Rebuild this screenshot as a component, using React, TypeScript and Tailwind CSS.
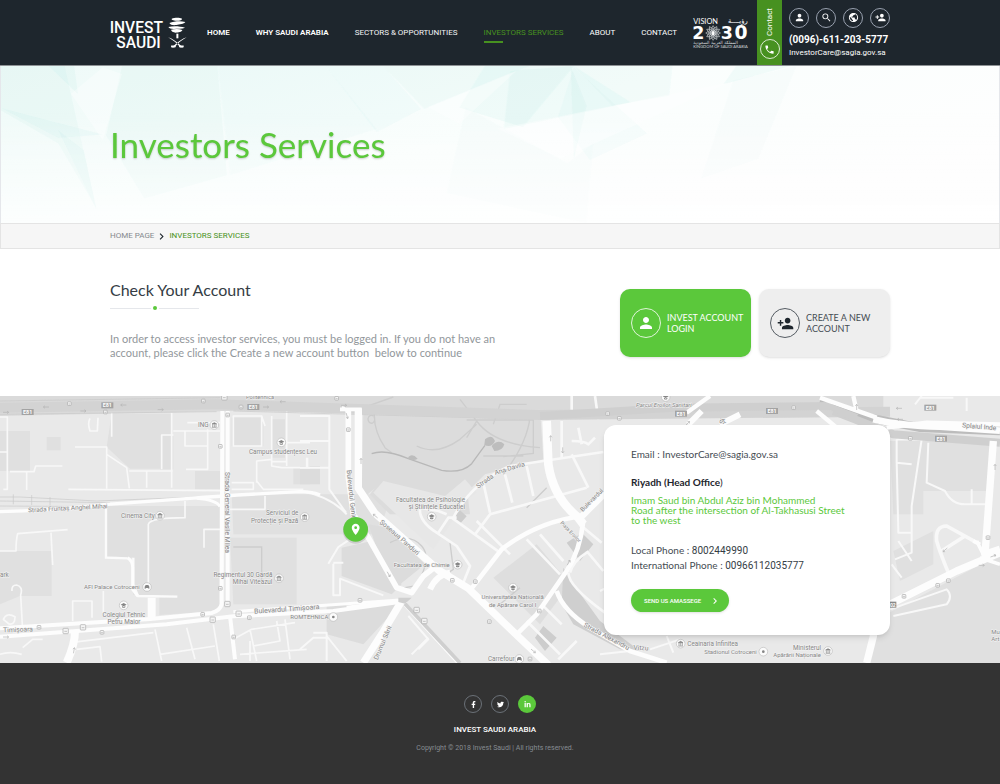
import React from "react";
import { MdPerson, MdSearch, MdPublic, MdPersonAdd, MdPhone, MdLocationOn, MdChevronRight } from "react-icons/md";
import { FaFacebookF, FaTwitter, FaLinkedinIn } from "react-icons/fa";

const roboto = "font-[Roboto,'Liberation_Sans',sans-serif]";
const lato = "font-[Lato,'Open_Sans',sans-serif]";

function InvestLogo() {
  return (
    <svg viewBox="28 39 232 114" className="h-[38px] w-[77px] shrink-0" fill="#fff" role="img" aria-label="Invest Saudi">
      <text x="27" y="95" fontFamily="Roboto" fontWeight="500" fontSize="47">INVEST</text>
      <text x="47" y="140" fontFamily="Roboto" fontWeight="500" fontSize="47">SAUDI</text>
      <path d="M214 53c8-4 24-4 30-1 3 3-2 6-12 7-10 0-20-1-18-6z" />
      <path d="M207 66c14-5 32-7 48-3-4 6-18 7-27 9-10 1-18 0-21-6z" />
      <path d="M204 78c14-4 34-3 50 2-8 4-22 2-34 4-8 0-15-2-16-6z" />
      <path d="M212 86c10-2 24-3 34 1-2 6-12 8-20 8-8-1-14-4-14-9z" />
      <path d="M228 98h6v14h-6z" />
      <path d="M203 109c13 4 26 13 38 25l8 6h-9c-10-14-22-22-37-31zM259 109c-13 4-26 13-38 25l-8 6h9c10-14 22-22 37-31z" />
      <path d="M212 134h14v5h-14zM236 134h14v5h-14z" />
    </svg>
  );
}

function VisionLogo() {
  const petals = Array.from({ length: 12 }, (_, i) => i * 30);
  return (
    <svg viewBox="38 46 170 100" className="h-[34px] w-[57px] shrink-0" fill="#fff" role="img" aria-label="Vision 2030">
      <text x="42" y="69" fontFamily="Lato" fontSize="22">VISION</text>
      <text x="204" y="67" textAnchor="end" fontFamily="DejaVu Sans" fontSize="20">رؤيــــة</text>
      <text x="39" y="113" fontFamily="DejaVu Sans" fontWeight="700" fontSize="52">2</text>
      <text x="124" y="113" fontFamily="DejaVu Sans" fontWeight="700" fontSize="52">3</text>
      <text x="165" y="113" fontFamily="DejaVu Sans" fontWeight="700" fontSize="56">0</text>
      <g fill="none" stroke="#c6cacd" strokeWidth="2">
        {petals.map((a) => (
          <path key={a} d="M101 96l-6-12 6-10 6 10z" transform={`rotate(${a} 101 96)`} />
        ))}
        <circle cx="101" cy="96" r="9" />
      </g>
      <path d="M98 91h6v11h-6z" />
      <text x="42" y="129" fontFamily="DejaVu Sans" fontSize="13" fill="#d5d8da">المملكة العربية السعودية</text>
      <text x="42" y="141" fontFamily="Lato" fontSize="12" fill="#d5d8da">KINGDOM OF SAUDI ARABIA</text>
    </svg>
  );
}

const navItems = [
  { label: "HOME", cls: "font-semibold text-white" },
  { label: "WHY SAUDI ARABIA", cls: "font-semibold text-white" },
  { label: "SECTORS & OPPORTUNITIES", cls: "text-gray-100" },
  { label: "INVESTORS SERVICES", cls: "text-[#479120]", active: true },
  { label: "ABOUT", cls: "text-white" },
  { label: "CONTACT", cls: "text-white" },
];

const tools = [
  { label: "Account", Icon: MdPerson },
  { label: "Search", Icon: MdSearch },
  { label: "Language", Icon: MdPublic },
  { label: "Register", Icon: MdPersonAdd },
];

function Header() {
  return (
    <header className={`border-b border-[#8e9295] bg-[#1e262d] ${roboto}`}>
      <div className="mx-auto flex h-[65px] max-w-[780px] items-center">
        <a href="#home" className="shrink-0"><InvestLogo /></a>
        <nav className="ml-5 flex gap-[26px] text-[8px] leading-3 whitespace-nowrap">
          {navItems.map((n) => (
            <a key={n.label} href="#nav" className={`relative ${n.cls}`}>
              {n.label}
              {n.active && <span className="absolute -bottom-[4px] left-0 h-[2px] w-[19px] bg-[#479120]" />}
            </a>
          ))}
        </nav>
        <div className="ml-auto flex h-full shrink-0 items-center">
          <VisionLogo />
          <a href="#contact" className="ml-2 flex h-full w-[25px] flex-col items-center justify-between bg-[#479120] pt-2 pb-1.5 text-white">
            <span className="rotate-180 text-[8px] leading-3 [writing-mode:vertical-rl]">Contact</span>
            <span className="flex size-5 items-center justify-center rounded-full border border-white/80"><MdPhone size={11} /></span>
          </a>
          <div className="ml-[7px] flex w-[101px] flex-col text-white">
            <div className="flex justify-between">
              {tools.map(({ label, Icon }) => (
                <button key={label} aria-label={label} className="flex size-5 items-center justify-center rounded-full border border-gray-400">
                  <Icon size={11} />
                </button>
              ))}
            </div>
            <a href="tel:00966112035777" className="mt-1 text-[10px] leading-4 font-bold whitespace-nowrap">(0096)-611-203-5777</a>
            <a href="mailto:InvestorCare@sagia.gov.sa" className="text-[8px] leading-[10px]">InvestorCare@sagia.gov.sa</a>
          </div>
        </div>
      </div>
    </header>
  );
}

function Hero() {
  return (
    <section className="relative border-x border-gray-200 bg-[#fbfefe]">
      <svg viewBox="0 16 1568 474" preserveAspectRatio="none" className="absolute inset-0 size-full" aria-hidden="true">
        <defs>
          <linearGradient id="wash" x1="0" y1="0" x2="1" y2="0.5">
            <stop offset="0" stopColor="#eefaf8" />
            <stop offset="0.55" stopColor="#fafefd" />
            <stop offset="1" stopColor="#fefefe" />
          </linearGradient>
          <linearGradient id="fade" x1="0" y1="0" x2="0" y2="1">
            <stop offset="0.3" stopColor="#fff" stopOpacity="0" />
            <stop offset="1" stopColor="#fff" stopOpacity="0.6" />
          </linearGradient>
        </defs>
        <rect y="16" width="1568" height="474" fill="url(#wash)" />
        <g fill="#7ed8ce" opacity=".8">
          <path opacity=".08" d="M0 16h100l50 430L90 250 0 150z" />
          <path opacity=".1" d="M75 16h40l6 85z" />
          <path opacity=".09" d="M0 143l160 80-70 10z" />
          <path opacity=".09" d="M90 210l40 60 20 180z" />
          <path opacity=".08" d="M190 16h150l15 330-130 70-60-190z" />
          <path opacity=".05" d="M340 16h170l80 190-230 140z" />
          <path opacity=".08" d="M600 16h230l-165 130z" />
          <path opacity=".07" d="M510 16h90l60 130-70 70z" />
          <path opacity=".1" d="M760 16h140l-80 185-100-60z" />
          <path opacity=".1" d="M800 30l100-14 90 110-200 80z" />
          <path opacity=".1" d="M895 16l5 280 20-160z" />
          <path opacity=".07" d="M900 20l115 200-90 80-50-130z" />
          <path opacity=".08" d="M900 16h155l-5 90-90 30z" />
          <path opacity=".1" d="M1155 16h85l-105 55z" />
          <path opacity=".04" d="M1150 60l100-44-60 280-90 60z" />
          <path opacity=".04" d="M700 400l30-260 160 170 40-60-10 240z" />
        </g>
        <path fill="#fff" opacity=".35" d="M670 140L810 30l-90 160zM1145 65L780 205l100 90zM110 100l50-80 30 20-30 200z" />
        <rect y="16" width="1568" height="474" fill="url(#fade)" />
      </svg>
      <div className="relative mx-auto max-w-[780px] pt-[58px] pb-[59px]">
        <h1 className={`text-[35px] leading-10 text-[#5bc83b] [text-shadow:0_1px_2px_rgba(0,0,0,0.2)] ${lato}`}>Investors Services</h1>
      </div>
    </section>
  );
}

function Breadcrumb() {
  return (
    <nav aria-label="Breadcrumb" className={`border border-[#e4e4e4] bg-[#f6f6f6] ${roboto}`}>
      <div className="mx-auto flex h-6 max-w-[780px] items-center gap-px text-[8px] leading-3">
        <a href="#home" className="text-[#85898d]">HOME PAGE</a>
        <MdChevronRight size={13} className="text-[#1e262d]" />
        <span className="text-[#479120]">INVESTORS SERVICES</span>
      </div>
    </nav>
  );
}

function Account() {
  return (
    <section className={`bg-white ${lato}`}>
      <div className="mx-auto flex max-w-[780px] items-start justify-between pt-[31px] pb-9">
        <div>
          <h2 className="text-[16px] leading-5 text-[#353d45]">Check Your Account</h2>
          <div className="mt-[6px] flex w-[89px] items-center gap-[2px]">
            <span className="h-px flex-1 bg-gray-200" />
            <span className="size-1 rounded-full bg-[#5bc83b]" />
            <span className="h-px flex-1 bg-gray-200" />
          </div>
          <p className="mt-[22px] w-[400px] text-[11px] leading-[14px] whitespace-pre-line text-[#92979b]">
            {"In order to access investor services, you must be logged in. If you do not have an\naccount, please click the Create a new account button \u00a0below to continue"}
          </p>
        </div>
        <div className="mt-[9px] flex gap-2 text-[9px] leading-[11px]">
          <button className="flex h-[68px] w-[131px] items-center gap-1.5 rounded-[10px] bg-[#5bc83b] pl-[11px] text-left text-white shadow-sm">
            <span className="flex size-[30px] shrink-0 items-center justify-center rounded-full border border-white/80"><MdPerson size={18} /></span>
            <span>INVEST ACCOUNT<br />LOGIN</span>
          </button>
          <button className="flex h-[68px] w-[131px] items-center gap-1.5 rounded-[10px] bg-[#eee] pl-[11px] text-left text-[#454c53] shadow">
            <span className="flex size-[30px] shrink-0 items-center justify-center rounded-full border border-[#555c63] text-[#1e262d]"><MdPersonAdd size={17} /></span>
            <span>CREATE A NEW<br />ACCOUNT</span>
          </button>
        </div>
      </div>
    </section>
  );
}

type LabelProps = { x: number; y: number; s?: number; r?: number; anchor?: "start" | "middle" | "end"; italic?: boolean; children: React.ReactNode };
function Label({ x, y, s = 19, r = 0, anchor = "start", italic, children }: LabelProps) {
  return (
    <text x={x} y={y} fontSize={s} textAnchor={anchor} fontStyle={italic ? "italic" : "normal"} transform={`rotate(${r} ${x} ${y})`}
      fill="#858585" stroke="#f4f4f4" strokeWidth="3" paintOrder="stroke" fontFamily="Roboto">
      {children}
    </text>
  );
}

function Shield({ x, y }: { x: number; y: number }) {
  return (
    <g transform={`translate(${x} ${y})`}>
      <rect x="-18" y="-9" width="36" height="18" fill="#a3a3a3" />
      <text textAnchor="middle" y="6" fontSize="16" fontWeight="700" fontFamily="Roboto" fill="#fff">E81</text>
    </g>
  );
}

function Poi({ x, y, kind = "cap" }: { x: number; y: number; kind?: "cap" | "bank" | "dot" | "car" }) {
  return (
    <g transform={`translate(${x} ${y})`}>
      <circle r="13" fill="#fbfbfb" stroke="#bdbdbd" strokeWidth="2" />
      {kind === "cap" && <path d="M-9-2L0-7 9-2 0 3zM-5 2v4q5 3 10 0V2L0 5z" fill="#858585" />}
      {kind === "bank" && <path d="M-7-3L0-7l7 4zM-5-2v8M0-2v8M5-2v8M-7 7h14" fill="#858585" stroke="#858585" strokeWidth="2" />}
      {kind === "dot" && <circle r="4" fill="#858585" />}
      {kind === "car" && <path d="M-7 5v-6l3-5h8l3 5v6H4V3h-8v2z" fill="#858585" />}
    </g>
  );
}

function Stop({ x, y, big }: { x: number; y: number; big?: boolean }) {
  const w = big ? 16 : 11;
  return (
    <g transform={`translate(${x} ${y})`}>
      <rect x={-w / 2} y={-w / 2} width={w} height={w} rx="2" fill="#f5f5f5" stroke="#a9a9a9" strokeWidth="2" />
      <path d={`M${-w / 4} 1h${w / 2}`} stroke="#a9a9a9" strokeWidth="2" />
    </g>
  );
}

function Arrow({ x, y, r = 0 }: { x: number; y: number; r?: number }) {
  return <path transform={`translate(${x} ${y}) rotate(${r})`} d="M-9 0H8M3-4l5 4-5 4" fill="none" stroke="#b4b4b4" strokeWidth="2" />;
}

function CityMap() {
  return (
    <svg viewBox="0 15 3000 801" preserveAspectRatio="xMidYMid slice" className="absolute inset-0 size-full" role="img" aria-label="Map">
      <rect y="15" width="3000" height="801" fill="#e9e9e9" />

      {/* blocks */}
      <g fill="#e0e0e0">
        <path d="M0 15h2650v50L1620 75 700 60 0 75z" fill="#dadada" />
        <path d="M0 120h90v120H0zM140 138h42v40h-42zM335 68h180v165H390L320 168zM0 480h155v135H60L0 640z" />
        <path d="M318 345h340v315l-180 12V612H400V500l-82-5zM485 135h35v100h-40zM585 240h75v55h-75z" />
        <path d="M695 80h95v85h-95zM815 85h40v115h-40zM880 230h50v50h-50zM695 310h480l-40 120H700zM690 440h200v200H700z" />
        <path d="M900 225h60v55h-60zM1025 470l90-20 90 130-30 30-150-55zM980 640l230-10-120 130-110-30z" fill="#dcdcdc" />
      </g>
      <path d="M1090 55h530l10 150-175 45-75 75-65 55-170-105-60 50z" fill="#dcdcdc" />
      <path d="M1140 270l-30 40 60 60h240l-10-85-60 60z" fill="#dcdcdc" />
      <path d="M1150 270l-30 35 180 170 100-150 30-20-35-40-60 50z" fill="#e7e7e7" />
      <path d="M1105 400l60 10 110 110-100 80z" fill="#dcdcdc" />
      <path d="M1480 560l130-100 100 120-90 120z" fill="#dedede" />
      <path d="M1690 530l30 50 80 110 120 90-60-5-140-75-35-60z" fill="#cfcfcf" />
      <path d="M1360 380l20-22 20 18-20 22zM1630 705l40 35-35 40-30-40zM1700 455l45-30 35 35-40 50z" fill="#cdcdcd" />
      <path d="M2670 150h300v150h-200v70h-90zM2680 480l120-60v100l-100 50zM2620 690l380-200v326H2600z" fill="#e0e0e0" />

      {/* park paths and lake */}
      <g fill="none" stroke="#cdcdcd" strokeWidth="4">
        <path d="M1090 50l90-32M1125 50q-10 60 30 120l20 15M1120 75a10 12 0 1 0 1 1M1250 165q60 30 130-20l50-45M1380 25l50 65-30 50M1400 87h200v100l-90 10M1430 90q50 70 190 80M1590 80q-10 80-80 170M1450 195l120 0M1480 100l20-60h80" />
        <path d="M1170 455q60-30 95 10t-20 120l-60 10M1350 455l10 80-30 20M1640 290l-60 60M1500 640l60-50M700 468h85v110" />
      </g>
      <path d="M1115 188q40-15 110 15l100 35q60 10 90-20 25-35 40-55" fill="none" stroke="#b8b8b8" strokeWidth="4" />
      <path d="M1455 145q20-18 30 5-10 22-32 12zM1475 165q20-22 38-5-5 20-30 20zM1225 198q12-12 28 5-12 8-28 0z" fill="#bdbdbd" />

      {/* minor roads */}
      <g fill="none" stroke="#f8f8f8" strokeWidth="5" strokeLinejoin="round">
        <path d="M0 78h22v217H10M0 183h22M30 242h72l5-17h80M80 242v55M335 65v72M225 168h95v125M320 190l60 40 8 62M320 168v20M388 240h130M440 240v50M485 235V132h35M515 65v225M520 120h140M555 120v45h68v-50M623 120v115h-65M562 95h98" />
        <path d="M270 82q-8 15 0 38h22l2-40M205 295l355 3 120 1M0 480h48q0-35 5-52l150-12M153 425l5 97M445 600V400q5-20 110-20v-50M310 600v65M218 690v-60h58v50M612 470v-55h50M695 275h65v20h-65M690 355h105v-40" />
        <path d="M36 600q-2-18 14-18 20 5 12 30l5 90M10 685q10-22 35-8 0 25-18 22zM0 790q30-10 65 0M68 770l30-25h30M230 775l70-8 5 45M210 755l250-30M465 715l20 95M480 790l165-25M560 710l25 95M640 700l18 110M700 745l55-30 130-20M750 750v60M750 715l20 95M830 690l10 60-80 15M855 685l15 120M720 790l200-15" />
        <path d="M700 75v90h85v-90zM785 75l10 30M860 60v165M815 75v150l30 5h85M860 155h70M815 212h45M770 275v-65l45-5M770 270l20 25h120M920 200v30" />
      </g>
      <path d="M318 345v155l65 2M400 500v80l14 35 118 2" fill="none" stroke="#fbfbfb" strokeWidth="7" />
      <g transform="translate(900 0)" fill="none" stroke="#f8f8f8" strokeLinejoin="round">
        <path strokeWidth="6" d="M0 75h88v220l50 70M0 150h88M0 230h88M22 200v28M0 300q90 15 140 70M85 518l30-50 30-20M100 518v95h20v-50l130 50M100 515l30 0M0 775l40-35h45M40 725h40v85M80 735l60 75M325 675l60 70-30 30M385 740l-50 50" />
        <path strokeWidth="8" d="M460 380q55-105 170-155l280-42M455 380l145 105M550 275l20 90M615 250l22 85M680 225l20 90M740 215l20 80M525 430l45-60 290-80M415 425l30-45h25M440 370l-25-10-55-10q-5 40 50 75l60 40 40 60-20 50M680 445l100 105M720 430l70 80M630 490l-100-100M785 90v110M815 15v50M885 15l10 70M865 290l-50-100M815 150q40 0 50 10l20-20M835 110l10 50M725 640l60 60M680 690l100 100M830 750l-55 55M905 455l-60-50M860 480l50 60M810 545q10-35 50-60M805 545q0 40 110 120" />
      </g>
      <g transform="translate(1800 0)" fill="none" stroke="#f8f8f8" strokeLinejoin="round">
        <path strokeWidth="6" d="M890 145h75l-30 200v140l-50 20M890 145v70l45 5M890 210l5 215h40M985 155l-5 120 55 25q20 40 60 40h60M1115 295v45M875 520l30 40M895 450l40 60M870 655l170-60q20 20 0 45l-160 35M0 80l40-25M0 600l40-20M945 40l20-25M960 20h100M1100 20v40M200 735l20 50M150 775l90-30M0 790l90-10" />
        <path strokeWidth="11" d="M1045 545q-25-60-35-95-5-45 30-45l100 55M1025 480l70-45" />
      </g>

      {/* rail corridor */}
      <g fill="none" stroke="#c9c9c9" strokeWidth="2">
        <path d="M0 318h60l230 12 380-15M0 330l330 5M0 345l300 2M40 310v30M95 312v30M150 318v25M0 30l660-10M0 70l650-8M700 60l900 25M1640 85l700-40" />
      </g>
      <path d="M0 50L650 40l970 32 1050-10" fill="none" stroke="#d3d3d3" strokeWidth="30" />
      <path d="M2460 30l120 45 180 35 240 10" fill="none" stroke="#bcbcbc" strokeWidth="26" />
      <path d="M1620 75l400-25 480-5M2500 60l180 70 320 25" fill="none" stroke="#cfcfcf" strokeWidth="24" />

      {/* main roads */}
      <g fill="none" stroke="#fdfdfd" strokeLinejoin="round">
        <path strokeWidth="10" d="M0 362q180-5 320-22l250-18q130-10 330-20 40 0 60 10" />
        <path strokeWidth="9" d="M590 322q60 5 70 25M383 500q15 10 15 30v65l15 20" />
        <path strokeWidth="12" d="M667 60l-2 580q-5 20-30 26L450 684 0 712M683 60v570M690 675l15 130" />
        <path strokeWidth="12" d="M0 737l500-37 200-24 300-16 220-30" />
        <path strokeWidth="9" d="M700 662l500-35" />
        <path strokeWidth="24" d="M455 620v60M225 720q0 40-25 95" />
        <path strokeWidth="17" d="M1045 60v200l15 110 45 70 85 150 45 15 35-50 45-35" />
        <path strokeWidth="22" d="M1075 52v240l50 75 190 170 90 55 150 145 90 85" />
        <path strokeWidth="11" d="M1020 55h65M1045 60l-20-10" />
        <path strokeWidth="22" d="M1205 630l-60 100-55 85" />
        <path strokeWidth="12" d="M1215 640l160 175M1040 650l180-22" />
        <path strokeWidth="18" d="M1290 595q20-45 60-50" />
        <path strokeWidth="26" d="M1640 90l5 130q15 100 90 160l15 20" />
        <path strokeWidth="14" d="M1405 605l100-130q110-85 245-100l70-70M1750 390q-10 90-50 150l-90 130-60 60M1670 600q20 60 100 110l120 70 110 35" />
        <path strokeWidth="18" d="M1740 380l150-145M2220 70l-60 30M2105 60l-40 40" />
        <path strokeWidth="13" d="M2060 65l70-50M2570 60l-10-45M2460 20l170 60M2660 110l120-15 220 5M2450 60l60 50" />
        <path strokeWidth="20" d="M2620 85q80 20 200 22l180 12" />
        <path strokeWidth="22" d="M2980 150l-25 340 45-15M2670 640l200-100 130-55M2600 816l20-80V680" />
        <path strokeWidth="11" d="M2930 450l30 60M2940 460l-20-10M2940 500l60 20" />
      </g>
      <path d="M1195 620h40l-20 18-20-5zM2495 40l80 30-15 20-65-30z" fill="#cfcfcf" />
      <path d="M1215 638l165 178" stroke="#cfcfcf" strokeWidth="11" />

      {/* transit stops and direction arrows */}
      {[[208, 38], [316, 63], [661, 166], [610, 30], [723, 48], [683, 72], [661, 592], [608, 670], [117, 709], [306, 724], [748, 680], [701, 738], [1010, 22], [1045, 116], [1080, 628], [1357, 568], [1426, 572], [1468, 692], [1618, 660], [1590, 804], [1823, 68], [1858, 82], [2381, 50], [2731, 142], [2712, 616], [2813, 583], [2845, 569], [2964, 440]].map(([x, y]) => (
        <Stop key={`${x}-${y}`} x={x} y={y} />
      ))}
      {[[197, 720], [249, 709], [682, 639], [638, 686], [716, 668], [673, 19], [1250, 657], [1273, 690]].map(([x, y]) => (
        <Stop key={`${x}-${y}`} x={x} y={y} big />
      ))}
      {[[18, 64, 0], [138, 48, 180], [250, 60, 0], [370, 42, 180], [482, 56, 0], [798, 48, 0], [848, 32, 180], [18, 738, 0], [222, 778, -80], [1032, 43, 0], [1083, 210, -90], [1041, 75, 75], [1126, 375, -140], [1166, 550, 60], [1652, 142, -90], [1688, 178, 90], [1706, 515, -60], [1600, 780, 40], [2063, 97, -45], [2570, 48, -90], [2697, 52, 180], [2700, 85, 180], [2985, 228, -90], [2980, 495, -20], [2945, 523, 0], [2835, 477, 140]].map(([x, y, r]) => (
        <Arrow key={`${x}-${y}`} x={x} y={y} r={r} />
      ))}
      {[[83, 63], [322, 43], [760, 48], [2043, 68], [2316, 60], [2791, 50], [2823, 143]].map(([x, y]) => (
        <Shield key={`${x}-${y}`} x={x} y={y} />
      ))}
      <g>
        <rect x="2665" y="632" width="24" height="18" fill="#8b8b8b" />
        <text x="2670" y="647" fontSize="15" fontWeight="700" fontFamily="Roboto" fill="#fff">02</text>
      </g>

      {/* labels */}
      <Label x={738} y={24} s={17}>Politehnica</Label>
      <Label x={594} y={108}>ING</Label><Poi x={643} y={102} kind="bank" />
      <Poi x={844} y={154} /><Label x={747} y={189}>Campus studențesc Leu</Label>
      <Label x={85} y={364} s={19} r={-3}>Strada Fruntaș Anghel Mihai</Label>
      <Label x={363} y={380}>Cinema City</Label><Poi x={480} y={374} kind="bank" />
      <Label x={675} y={243} s={20} r={90}>Strada General Vasile Milea</Label>
      <Label x={895} y={373} anchor="end">Serviciul de</Label>
      <Label x={895} y={395} anchor="end">Protecție și Pază</Label><Poi x={914} y={378} kind="bank" />
      <Label x={817} y={557} anchor="end">Regimentul 30 Gardă</Label>
      <Label x={817} y={579} anchor="end">Mihai Viteazul</Label><Poi x={837} y={562} kind="bank" />
      <Label x={0} y={557}>ark</Label>
      <Label x={252} y={594} s={18}>AFI Palace Cotroceni</Label><Poi x={441} y={588} kind="car" />
      <Poi x={371} y={643} />
      <Label x={372} y={677} anchor="middle">Colegiul Tehnic</Label>
      <Label x={372} y={698} anchor="middle">Petru Maior</Label>
      <Label x={10} y={724} s={20} r={-2}>Timișoara</Label>
      <Label x={763} y={668} s={21} r={-4}>Bulevardul Timișoara</Label>
      <Label x={871} y={684} s={18}>ROMTEHNICA</Label><Poi x={1000} y={678} kind="dot" />
      <Label x={1040} y={238} s={20} r={84}>Bulevardul Geniului</Label>
      <Label x={1395} y={333} anchor="end">Facultatea de Psihologie</Label>
      <Label x={1395} y={355} anchor="end">și Științele Educației</Label><Poi x={1295} y={377} />
      <Label x={1138} y={395} s={20} r={41}>Șoseaua Panduri</Label>
      <Label x={1181} y={527} s={18}>Facultatea de Chimie</Label><Poi x={1373} y={521} />
      <Label x={1435} y={293} s={20} r={-36}>Strada</Label>
      <Label x={1486} y={252} s={20} r={-17}>Ana Davila</Label>
      <Poi x={1539} y={590} />
      <Label x={1538} y={625} s={18} anchor="middle">Universitatea Națională</Label>
      <Label x={1538} y={647} s={18} anchor="middle">de Apărare Carol I</Label>
      <Label x={1680} y={397} s={15} r={46}>Piața Eroilor</Label>
      <Label x={1748} y={363} s={19} r={-45}>Bulevardul</Label>
      <Label x={1133} y={808} s={20} r={-67}>Drumul Sării</Label>
      <Label x={1464} y={811}>Carrefour</Label><Poi x={1558} y={804} kind="car" />
      <Label x={1750} y={706} s={20} r={28}>Strada Alexandru</Label>
      <Label x={1900} y={776} s={20} r={3}>Vitzu</Label>
      <Poi x={1997} y={18} />
      <Label x={1908} y={49} s={18} italic>Parcul Eroilor Sanitari</Label>
      <Label x={2172} y={100} s={20} r={-80}>Și</Label>
      <Label x={2886} y={109} s={20} r={5}>Splaiul Inde</Label>
      <Poi x={2042} y={758} kind="bank" /><Label x={2062} y={765}>Ceainaria Infinitea</Label>
      <Label x={2113} y={788} s={18}>Stadionul Cotroceni</Label><Poi x={2290} y={782} kind="dot" />
      <Label x={2463} y={777} anchor="end">Ministerul</Label>
      <Label x={2463} y={798} s={18} anchor="end">Apărării Naționale</Label><Poi x={2484} y={780} kind="bank" />
      <Label x={2974} y={728} s={18}>Mu</Label>
      <Label x={2974} y={749} s={18}>Art</Label>

      {/* office pin */}
      <circle cx="1067" cy="420" r="38" fill="#000" opacity=".12" />
      <circle cx="1067" cy="415" r="37" fill="#5bc83b" />
      <MdLocationOn x="1047" y="395" size={40} color="#fff" />
    </svg>
  );
}

function Location() {
  return (
    <section className="relative bg-[#e7e7e7]">
      <CityMap />
      <div className="relative mx-auto flex max-w-[780px] justify-end pt-[29px] pb-7">
        <address className={`w-[286px] rounded-xl bg-white px-[27px] pt-[22px] pb-[23px] text-[10px] text-[#454c53] not-italic shadow-md ${lato}`}>
          <p className="leading-[14px]">Email : InvestorCare@sagia.gov.sa</p>
          <h3 className="mt-[14px] leading-[14px] font-bold text-[#1e262d]">Riyadh (Head Office<span className="font-normal">)</span></h3>
          <p className="mt-[6px] leading-[10px] text-[#5bc83b]">
            Imam Saud bin Abdul Aziz bin Mohammed<br />Road after the intersection of Al-Takhasusi Street<br />to the west
          </p>
          <p className="mt-[18px] leading-[14px]">Local Phone : <span className="font-[Roboto] text-[#353d45]">8002449990</span></p>
          <p className="leading-[14px]">International Phone : <span className="font-[Roboto] text-[#353d45]">00966112035777</span></p>
          <button className={`mt-4 flex h-[23px] w-[98px] items-center justify-between rounded-full bg-[#5bc83b] pr-2 pl-[13px] text-[6px] font-medium text-white shadow ${roboto}`}>
            SEND US AMASSEGE
            <MdChevronRight size={12} />
          </button>
        </address>
      </div>
    </section>
  );
}

const socials = [
  { label: "Facebook", Icon: FaFacebookF, cls: "border border-[#6b7178]" },
  { label: "Twitter", Icon: FaTwitter, cls: "border border-[#6b7178]" },
  { label: "LinkedIn", Icon: FaLinkedinIn, cls: "bg-[#5bc83b]" },
];

function Footer() {
  return (
    <footer className={`flex flex-1 flex-col items-center bg-[#333] pt-8 pb-8 leading-3 ${roboto}`}>
      <div className="flex gap-[9px] text-white">
        {socials.map(({ label, Icon, cls }) => (
          <a key={label} href="#social" aria-label={label} className={`flex size-[18px] items-center justify-center rounded-full ${cls}`}>
            <Icon size={7} />
          </a>
        ))}
      </div>
      <p className="mt-[11px] pr-[10px] text-[8px] font-medium text-white">INVEST SAUDI ARABIA</p>
      <p className="mt-1.5 pr-[10px] text-[7px] text-[#868c92]">Copyright © 2018 Invest Saudi | All rights reserved.</p>
    </footer>
  );
}

export default function App() {
  return (
    <div className="flex min-h-screen flex-col bg-white">
      <Header />
      <main>
        <Hero />
        <Breadcrumb />
        <Account />
        <Location />
      </main>
      <Footer />
    </div>
  );
}
